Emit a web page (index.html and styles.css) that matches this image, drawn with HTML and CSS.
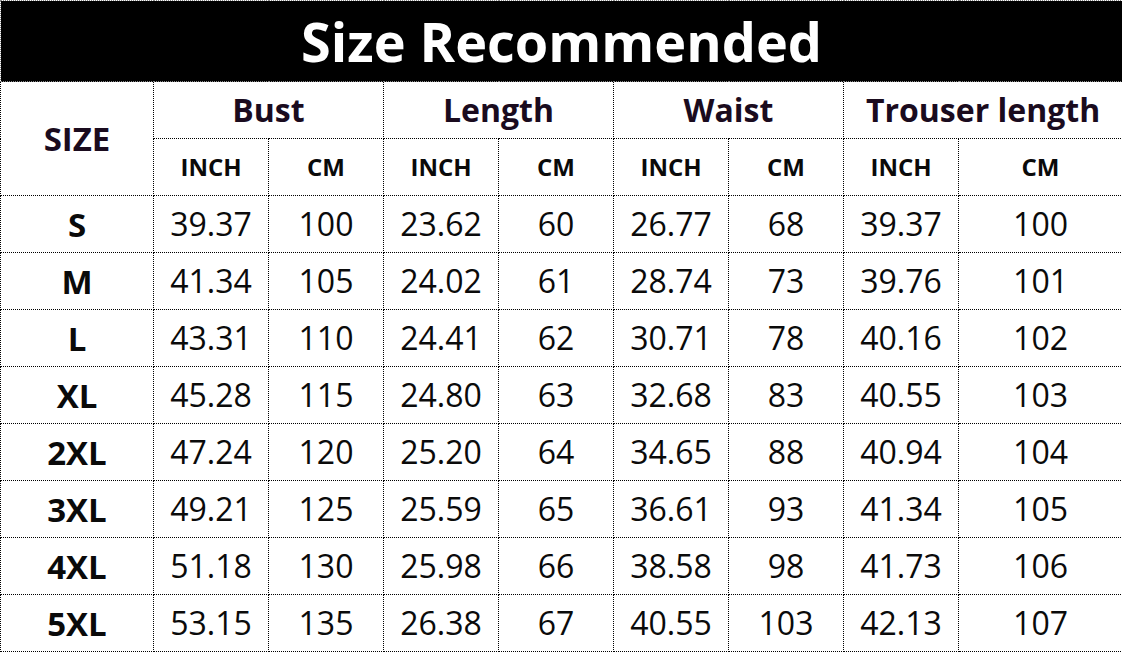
FILE: index.html
```html
<!DOCTYPE html>
<html>
<head>
<meta charset="utf-8">
<link rel="stylesheet" href="styles.css">
</head>
<body>
<table class="chart">
  <colgroup>
    <col class="c-size"><col class="c-val"><col class="c-val"><col class="c-val"><col class="c-val"><col class="c-val"><col class="c-val"><col class="c-val"><col class="c-last">
  </colgroup>
  <thead>
    <tr class="r-title"><th colspan="9" class="title">Size Recommended</th></tr>
    <tr class="r-head">
      <th rowspan="2" class="size-head">SIZE</th>
      <th colspan="2" class="group">Bust</th>
      <th colspan="2" class="group">Length</th>
      <th colspan="2" class="group">Waist</th>
      <th colspan="2" class="group">Trouser length</th>
    </tr>
    <tr class="r-head">
      <th class="unit">INCH</th><th class="unit">CM</th>
      <th class="unit">INCH</th><th class="unit">CM</th>
      <th class="unit">INCH</th><th class="unit">CM</th>
      <th class="unit">INCH</th><th class="unit">CM</th>
    </tr>
  </thead>
  <tbody>
    <tr><th class="size">S</th><td>39.37</td><td>100</td><td>23.62</td><td>60</td><td>26.77</td><td>68</td><td>39.37</td><td>100</td></tr>
    <tr><th class="size">M</th><td>41.34</td><td>105</td><td>24.02</td><td>61</td><td>28.74</td><td>73</td><td>39.76</td><td>101</td></tr>
    <tr><th class="size">L</th><td>43.31</td><td>110</td><td>24.41</td><td>62</td><td>30.71</td><td>78</td><td>40.16</td><td>102</td></tr>
    <tr><th class="size">XL</th><td>45.28</td><td>115</td><td>24.80</td><td>63</td><td>32.68</td><td>83</td><td>40.55</td><td>103</td></tr>
    <tr><th class="size">2XL</th><td>47.24</td><td>120</td><td>25.20</td><td>64</td><td>34.65</td><td>88</td><td>40.94</td><td>104</td></tr>
    <tr><th class="size">3XL</th><td>49.21</td><td>125</td><td>25.59</td><td>65</td><td>36.61</td><td>93</td><td>41.34</td><td>105</td></tr>
    <tr><th class="size">4XL</th><td>51.18</td><td>130</td><td>25.98</td><td>66</td><td>38.58</td><td>98</td><td>41.73</td><td>106</td></tr>
    <tr><th class="size">5XL</th><td>53.15</td><td>135</td><td>26.38</td><td>67</td><td>40.55</td><td>103</td><td>42.13</td><td>107</td></tr>
  </tbody>
</table>
</body>
</html>
```
FILE: styles.css
```css
html, body {
  margin: 0;
  padding: 0;
  background: #fff;
}
.chart {
  border-collapse: collapse;
  table-layout: fixed;
  width: 1122px;
  font-family: "Open Sans", "Noto Sans", sans-serif;
  color: #111;
}
.c-size { width: 153px; }
.c-val { width: 115px; }
.c-last { width: 164px; }
.chart th, .chart td {
  border: 1px dotted #000;
  padding: 0;
  text-align: center;
  vertical-align: middle;
  height: 56px;
  line-height: 1;
}
.chart td {
  font-size: 32px;
  font-weight: 400;
  color: #0a0a0a;
}
.r-title .title {
  height: 80px;
  background: #000;
  color: #fff;
  font-size: 54px;
  font-weight: 700;
  border-color: #888;
}
.size-head {
  font-size: 33px;
  font-weight: 700;
  color: #1a0b1e;
}
.group {
  font-size: 32px;
  font-weight: 700;
  color: #1a0b1e;
}
.unit {
  font-size: 24px;
  font-weight: 700;
  color: #0a0a0a;
}
.size {
  font-size: 33px;
  font-weight: 700;
  color: #0a0a0a;
}
```
